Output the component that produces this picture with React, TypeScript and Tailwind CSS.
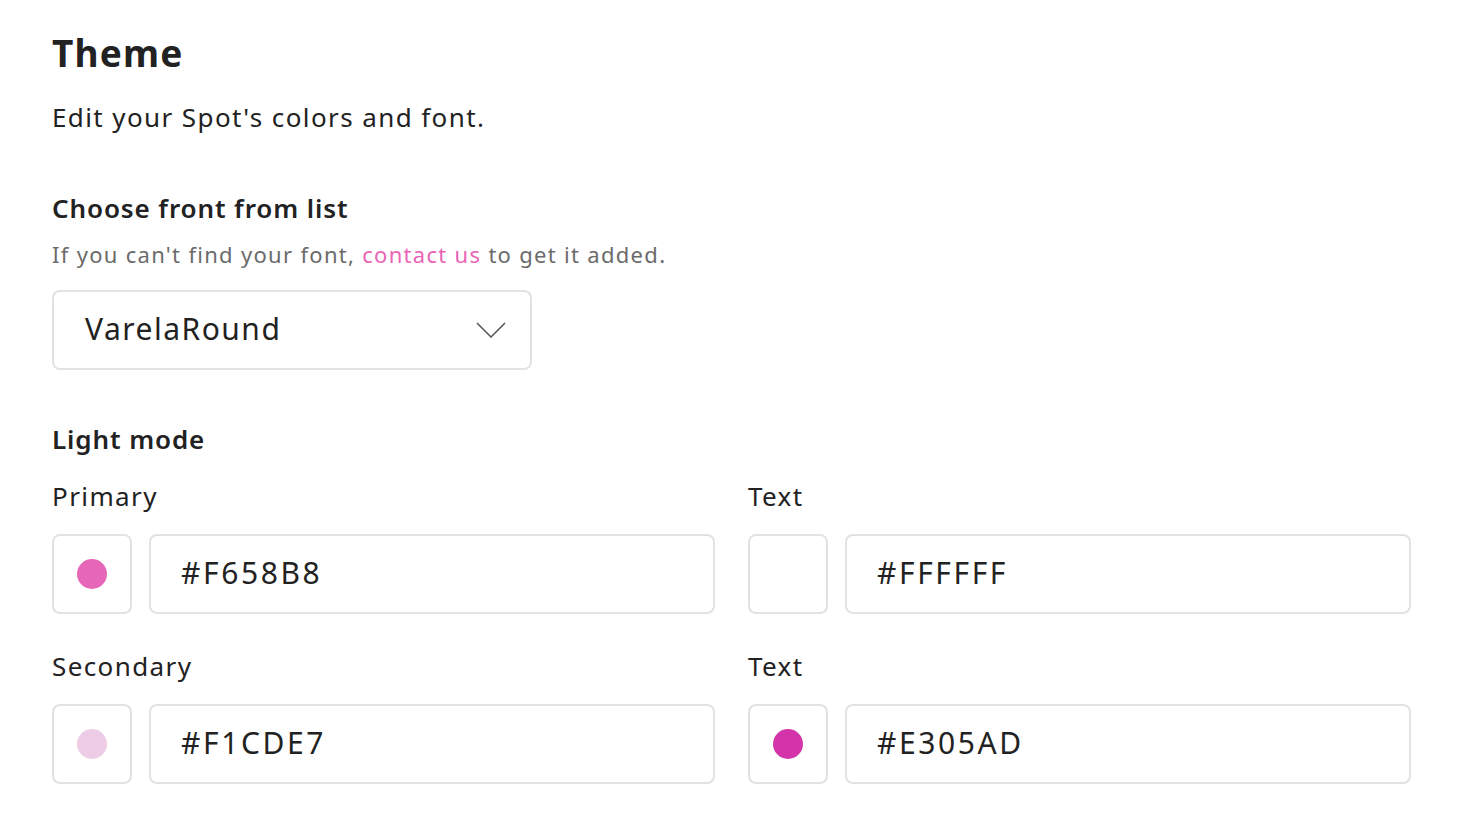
const FONT = { fontFamily: '"Noto Sans", "Liberation Sans", sans-serif' };

function ColorField({ label, value, dot }: { label: string; value: string; dot: string | null }) {
  return (
    <div className="flex flex-col">
      <div className="h-[36px] text-[26px] leading-[36px] tracking-[1.4px] text-[#222]">{label}</div>
      <div className="mt-[20px] flex gap-[17px]">
        <div className="grid h-[80px] w-[80px] shrink-0 place-items-center rounded-[8px] border-2 border-[#e2e2e2]">
          {dot && <span className="h-[30px] w-[30px] rounded-full" style={{ backgroundColor: dot }} />}
        </div>
        <div className="flex h-[80px] flex-1 items-center rounded-[8px] border-2 border-[#e2e2e2] px-[30px] pb-[3px] text-[30px] tracking-[2.6px] text-[#222]">
          {value}
        </div>
      </div>
    </div>
  );
}

export default function App() {
  return (
    <div className="min-h-screen bg-white pl-[52px] pr-[49px] pt-[28px]" style={FONT}>
      <h1 className="text-[37px] font-bold leading-[50px] tracking-[1.2px] text-[#222]">Theme</h1>
      <p className="mt-[21px] text-[26px] leading-[36px] tracking-[1.4px] text-[#222]">Edit your Spot's colors and font.</p>

      <h2 className="mt-[55px] text-[26px] font-semibold leading-[36px] tracking-[0.9px] text-[#222]">Choose front from list</h2>
      <p className="mt-[12px] text-[22px] leading-[32px] tracking-[1.3px] text-[#6b6b6b]">
        If you can't find your font, <a className="text-[#e964b5]">contact us</a> to get it added.
      </p>
      <div className="mt-[20px] flex h-[80px] w-[480px] items-center justify-between rounded-[8px] border-2 border-[#e2e2e2] pl-[31px] pr-[24px]">
        <span className="pb-[3px] text-[30px] tracking-[1.5px] text-[#222]">VarelaRound</span>
        <svg width="30" height="16" viewBox="0 0 30 16" fill="none" stroke="#555" strokeWidth="1.5">
          <polyline points="1,1 15,15 29,1" />
        </svg>
      </div>

      <h2 className="mt-[51px] text-[26px] font-semibold leading-[36px] tracking-[0.9px] text-[#222]">Light mode</h2>
      <div className="mt-[21px] grid grid-cols-2 gap-x-[33px] gap-y-[34px]">
        <ColorField label="Primary" value="#F658B8" dot="#e667b8" />
        <ColorField label="Text" value="#FFFFFF" dot={null} />
        <ColorField label="Secondary" value="#F1CDE7" dot="#eecce6" />
        <ColorField label="Text" value="#E305AD" dot="#d334a9" />
      </div>
    </div>
  );
}
